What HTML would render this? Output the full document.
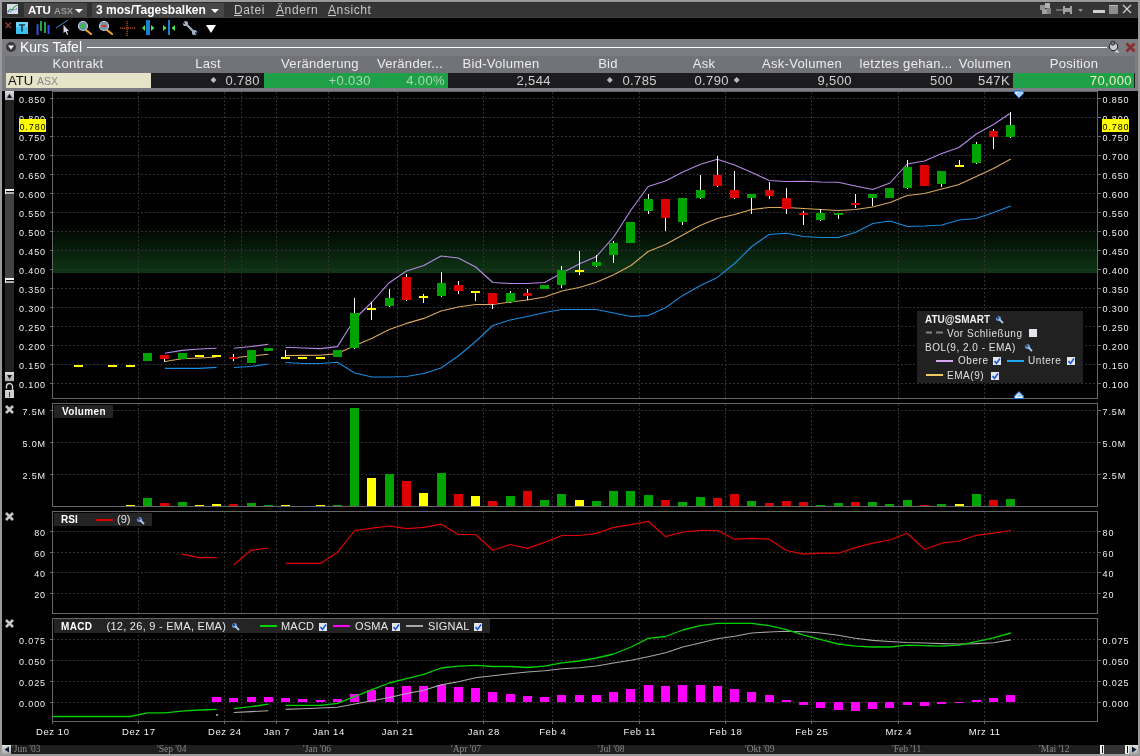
<!DOCTYPE html>
<html><head><meta charset="utf-8"><style>
html,body{margin:0;padding:0;background:#000;width:1140px;height:756px;overflow:hidden}
svg{display:block;will-change:transform} text{-webkit-font-smoothing:antialiased}
</style></head><body>
<svg width="1140" height="756" viewBox="0 0 1140 756">
<rect x="0" y="0" width="1140" height="756" fill="#9a9a9a" />
<rect x="2" y="2" width="1136" height="16" fill="#353535" />
<rect x="2" y="2" width="1136" height="1" fill="#2c2c2c" />
<rect x="2" y="17" width="1136" height="1" fill="#404040" />
<rect x="2" y="3" width="22" height="14" fill="#303030" />
<rect x="24" y="3" width="63" height="14" fill="#474747" />
<rect x="92" y="3" width="132" height="14" fill="#474747" />
<rect x="87" y="3" width="5" height="14" fill="#303030" />
<rect x="2" y="18" width="1136" height="21" fill="#000" />
<rect x="2" y="39" width="1136" height="52" fill="#7c7d82" />
<rect x="5" y="56" width="1130" height="17" fill="#727378" />
<rect x="151" y="73" width="984" height="15" fill="#1c1c1e" />
<rect x="6" y="73" width="145" height="15" fill="#e6e4c8" />
<rect x="264" y="73" width="184" height="15" fill="#1e9f48" />
<rect x="1013" y="73" width="121" height="15" fill="#1e9f48" />
<rect x="2" y="91" width="1136" height="654" fill="#000" />
<rect x="2" y="745" width="1136" height="9" fill="#1e1e1e" />
<defs><linearGradient id="gb" x1="0" y1="0" x2="0" y2="1"><stop offset="0" stop-color="#000"/><stop offset="1" stop-color="#0e3614"/></linearGradient></defs>
<rect x="53" y="222" width="1045" height="51" fill="url(#gb)" />
<line x1="53" y1="98.5" x2="1098" y2="98.5" stroke="#313131" stroke-width="1" stroke-dasharray="2 2"/>
<rect x="50" y="98" width="2" height="1" fill="#6a6a6a" />
<rect x="1098" y="98" width="3" height="1" fill="#6a6a6a" />
<text x="46" y="103" font-size="9" fill="#f0f0f0" text-anchor="end" font-weight="normal" font-family='"Liberation Sans", sans-serif' letter-spacing="0.9">0.850</text>
<text x="1102.5" y="103" font-size="9" fill="#f0f0f0" text-anchor="start" font-weight="normal" font-family='"Liberation Sans", sans-serif' letter-spacing="0.9">0.850</text>
<line x1="53" y1="117.5" x2="1098" y2="117.5" stroke="#313131" stroke-width="1" stroke-dasharray="2 2"/>
<rect x="50" y="117" width="2" height="1" fill="#6a6a6a" />
<rect x="1098" y="117" width="3" height="1" fill="#6a6a6a" />
<text x="46" y="122" font-size="9" fill="#f0f0f0" text-anchor="end" font-weight="normal" font-family='"Liberation Sans", sans-serif' letter-spacing="0.9">0.800</text>
<text x="1102.5" y="122" font-size="9" fill="#f0f0f0" text-anchor="start" font-weight="normal" font-family='"Liberation Sans", sans-serif' letter-spacing="0.9">0.800</text>
<line x1="53" y1="136.5" x2="1098" y2="136.5" stroke="#313131" stroke-width="1" stroke-dasharray="2 2"/>
<rect x="50" y="136" width="2" height="1" fill="#6a6a6a" />
<rect x="1098" y="136" width="3" height="1" fill="#6a6a6a" />
<text x="46" y="141" font-size="9" fill="#f0f0f0" text-anchor="end" font-weight="normal" font-family='"Liberation Sans", sans-serif' letter-spacing="0.9">0.750</text>
<text x="1102.5" y="141" font-size="9" fill="#f0f0f0" text-anchor="start" font-weight="normal" font-family='"Liberation Sans", sans-serif' letter-spacing="0.9">0.750</text>
<line x1="53" y1="155.5" x2="1098" y2="155.5" stroke="#313131" stroke-width="1" stroke-dasharray="2 2"/>
<rect x="50" y="155" width="2" height="1" fill="#6a6a6a" />
<rect x="1098" y="155" width="3" height="1" fill="#6a6a6a" />
<text x="46" y="160" font-size="9" fill="#f0f0f0" text-anchor="end" font-weight="normal" font-family='"Liberation Sans", sans-serif' letter-spacing="0.9">0.700</text>
<text x="1102.5" y="160" font-size="9" fill="#f0f0f0" text-anchor="start" font-weight="normal" font-family='"Liberation Sans", sans-serif' letter-spacing="0.9">0.700</text>
<line x1="53" y1="174.5" x2="1098" y2="174.5" stroke="#313131" stroke-width="1" stroke-dasharray="2 2"/>
<rect x="50" y="174" width="2" height="1" fill="#6a6a6a" />
<rect x="1098" y="174" width="3" height="1" fill="#6a6a6a" />
<text x="46" y="179" font-size="9" fill="#f0f0f0" text-anchor="end" font-weight="normal" font-family='"Liberation Sans", sans-serif' letter-spacing="0.9">0.650</text>
<text x="1102.5" y="179" font-size="9" fill="#f0f0f0" text-anchor="start" font-weight="normal" font-family='"Liberation Sans", sans-serif' letter-spacing="0.9">0.650</text>
<line x1="53" y1="193.5" x2="1098" y2="193.5" stroke="#313131" stroke-width="1" stroke-dasharray="2 2"/>
<rect x="50" y="193" width="2" height="1" fill="#6a6a6a" />
<rect x="1098" y="193" width="3" height="1" fill="#6a6a6a" />
<text x="46" y="198" font-size="9" fill="#f0f0f0" text-anchor="end" font-weight="normal" font-family='"Liberation Sans", sans-serif' letter-spacing="0.9">0.600</text>
<text x="1102.5" y="198" font-size="9" fill="#f0f0f0" text-anchor="start" font-weight="normal" font-family='"Liberation Sans", sans-serif' letter-spacing="0.9">0.600</text>
<line x1="53" y1="212.5" x2="1098" y2="212.5" stroke="#313131" stroke-width="1" stroke-dasharray="2 2"/>
<rect x="50" y="212" width="2" height="1" fill="#6a6a6a" />
<rect x="1098" y="212" width="3" height="1" fill="#6a6a6a" />
<text x="46" y="217" font-size="9" fill="#f0f0f0" text-anchor="end" font-weight="normal" font-family='"Liberation Sans", sans-serif' letter-spacing="0.9">0.550</text>
<text x="1102.5" y="217" font-size="9" fill="#f0f0f0" text-anchor="start" font-weight="normal" font-family='"Liberation Sans", sans-serif' letter-spacing="0.9">0.550</text>
<line x1="53" y1="231.5" x2="1098" y2="231.5" stroke="#313131" stroke-width="1" stroke-dasharray="2 2"/>
<rect x="50" y="231" width="2" height="1" fill="#6a6a6a" />
<rect x="1098" y="231" width="3" height="1" fill="#6a6a6a" />
<text x="46" y="236" font-size="9" fill="#f0f0f0" text-anchor="end" font-weight="normal" font-family='"Liberation Sans", sans-serif' letter-spacing="0.9">0.500</text>
<text x="1102.5" y="236" font-size="9" fill="#f0f0f0" text-anchor="start" font-weight="normal" font-family='"Liberation Sans", sans-serif' letter-spacing="0.9">0.500</text>
<line x1="53" y1="250.5" x2="1098" y2="250.5" stroke="#313131" stroke-width="1" stroke-dasharray="2 2"/>
<rect x="50" y="250" width="2" height="1" fill="#6a6a6a" />
<rect x="1098" y="250" width="3" height="1" fill="#6a6a6a" />
<text x="46" y="255" font-size="9" fill="#f0f0f0" text-anchor="end" font-weight="normal" font-family='"Liberation Sans", sans-serif' letter-spacing="0.9">0.450</text>
<text x="1102.5" y="255" font-size="9" fill="#f0f0f0" text-anchor="start" font-weight="normal" font-family='"Liberation Sans", sans-serif' letter-spacing="0.9">0.450</text>
<line x1="53" y1="269.5" x2="1098" y2="269.5" stroke="#313131" stroke-width="1" stroke-dasharray="2 2"/>
<rect x="50" y="269" width="2" height="1" fill="#6a6a6a" />
<rect x="1098" y="269" width="3" height="1" fill="#6a6a6a" />
<text x="46" y="274" font-size="9" fill="#f0f0f0" text-anchor="end" font-weight="normal" font-family='"Liberation Sans", sans-serif' letter-spacing="0.9">0.400</text>
<text x="1102.5" y="274" font-size="9" fill="#f0f0f0" text-anchor="start" font-weight="normal" font-family='"Liberation Sans", sans-serif' letter-spacing="0.9">0.400</text>
<line x1="53" y1="288.5" x2="1098" y2="288.5" stroke="#313131" stroke-width="1" stroke-dasharray="2 2"/>
<rect x="50" y="288" width="2" height="1" fill="#6a6a6a" />
<rect x="1098" y="288" width="3" height="1" fill="#6a6a6a" />
<text x="46" y="293" font-size="9" fill="#f0f0f0" text-anchor="end" font-weight="normal" font-family='"Liberation Sans", sans-serif' letter-spacing="0.9">0.350</text>
<text x="1102.5" y="293" font-size="9" fill="#f0f0f0" text-anchor="start" font-weight="normal" font-family='"Liberation Sans", sans-serif' letter-spacing="0.9">0.350</text>
<line x1="53" y1="307.5" x2="1098" y2="307.5" stroke="#313131" stroke-width="1" stroke-dasharray="2 2"/>
<rect x="50" y="307" width="2" height="1" fill="#6a6a6a" />
<rect x="1098" y="307" width="3" height="1" fill="#6a6a6a" />
<text x="46" y="312" font-size="9" fill="#f0f0f0" text-anchor="end" font-weight="normal" font-family='"Liberation Sans", sans-serif' letter-spacing="0.9">0.300</text>
<text x="1102.5" y="312" font-size="9" fill="#f0f0f0" text-anchor="start" font-weight="normal" font-family='"Liberation Sans", sans-serif' letter-spacing="0.9">0.300</text>
<line x1="53" y1="326.5" x2="1098" y2="326.5" stroke="#313131" stroke-width="1" stroke-dasharray="2 2"/>
<rect x="50" y="326" width="2" height="1" fill="#6a6a6a" />
<rect x="1098" y="326" width="3" height="1" fill="#6a6a6a" />
<text x="46" y="331" font-size="9" fill="#f0f0f0" text-anchor="end" font-weight="normal" font-family='"Liberation Sans", sans-serif' letter-spacing="0.9">0.250</text>
<text x="1102.5" y="331" font-size="9" fill="#f0f0f0" text-anchor="start" font-weight="normal" font-family='"Liberation Sans", sans-serif' letter-spacing="0.9">0.250</text>
<line x1="53" y1="345.5" x2="1098" y2="345.5" stroke="#313131" stroke-width="1" stroke-dasharray="2 2"/>
<rect x="50" y="345" width="2" height="1" fill="#6a6a6a" />
<rect x="1098" y="345" width="3" height="1" fill="#6a6a6a" />
<text x="46" y="350" font-size="9" fill="#f0f0f0" text-anchor="end" font-weight="normal" font-family='"Liberation Sans", sans-serif' letter-spacing="0.9">0.200</text>
<text x="1102.5" y="350" font-size="9" fill="#f0f0f0" text-anchor="start" font-weight="normal" font-family='"Liberation Sans", sans-serif' letter-spacing="0.9">0.200</text>
<line x1="53" y1="364.5" x2="1098" y2="364.5" stroke="#313131" stroke-width="1" stroke-dasharray="2 2"/>
<rect x="50" y="364" width="2" height="1" fill="#6a6a6a" />
<rect x="1098" y="364" width="3" height="1" fill="#6a6a6a" />
<text x="46" y="369" font-size="9" fill="#f0f0f0" text-anchor="end" font-weight="normal" font-family='"Liberation Sans", sans-serif' letter-spacing="0.9">0.150</text>
<text x="1102.5" y="369" font-size="9" fill="#f0f0f0" text-anchor="start" font-weight="normal" font-family='"Liberation Sans", sans-serif' letter-spacing="0.9">0.150</text>
<line x1="53" y1="383.5" x2="1098" y2="383.5" stroke="#313131" stroke-width="1" stroke-dasharray="2 2"/>
<rect x="50" y="383" width="2" height="1" fill="#6a6a6a" />
<rect x="1098" y="383" width="3" height="1" fill="#6a6a6a" />
<text x="46" y="388" font-size="9" fill="#f0f0f0" text-anchor="end" font-weight="normal" font-family='"Liberation Sans", sans-serif' letter-spacing="0.9">0.100</text>
<text x="1102.5" y="388" font-size="9" fill="#f0f0f0" text-anchor="start" font-weight="normal" font-family='"Liberation Sans", sans-serif' letter-spacing="0.9">0.100</text>
<line x1="138.5" y1="92" x2="138.5" y2="398" stroke="#313131" stroke-width="1" stroke-dasharray="2 2"/>
<line x1="224.5" y1="92" x2="224.5" y2="398" stroke="#313131" stroke-width="1" stroke-dasharray="2 2"/>
<line x1="241.5" y1="92" x2="241.5" y2="398" stroke="#313131" stroke-width="1" stroke-dasharray="2 2"/>
<line x1="276.5" y1="92" x2="276.5" y2="398" stroke="#313131" stroke-width="1" stroke-dasharray="2 2"/>
<line x1="328.5" y1="92" x2="328.5" y2="398" stroke="#313131" stroke-width="1" stroke-dasharray="2 2"/>
<line x1="397.5" y1="92" x2="397.5" y2="398" stroke="#313131" stroke-width="1" stroke-dasharray="2 2"/>
<line x1="483.5" y1="92" x2="483.5" y2="398" stroke="#313131" stroke-width="1" stroke-dasharray="2 2"/>
<line x1="552.5" y1="92" x2="552.5" y2="398" stroke="#313131" stroke-width="1" stroke-dasharray="2 2"/>
<line x1="639.5" y1="92" x2="639.5" y2="398" stroke="#313131" stroke-width="1" stroke-dasharray="2 2"/>
<line x1="725.5" y1="92" x2="725.5" y2="398" stroke="#313131" stroke-width="1" stroke-dasharray="2 2"/>
<line x1="811.5" y1="92" x2="811.5" y2="398" stroke="#313131" stroke-width="1" stroke-dasharray="2 2"/>
<line x1="898.5" y1="92" x2="898.5" y2="398" stroke="#313131" stroke-width="1" stroke-dasharray="2 2"/>
<line x1="984.5" y1="92" x2="984.5" y2="398" stroke="#313131" stroke-width="1" stroke-dasharray="2 2"/>
<rect x="52" y="91" width="1" height="308" fill="#666666" />
<rect x="1097" y="91" width="1" height="308" fill="#666666" />
<rect x="52" y="398" width="1046" height="1" fill="#666666" />
<rect x="52" y="91" width="1046" height="1" fill="#666666" />
<polyline points="164.8,353.2 182.0,350.4 199.3,349.0 216.6,348.2" fill="none" stroke="#b58ae6" stroke-width="1.1" stroke-linejoin="round"/>
<polyline points="233.8,348.2 251.1,346.5 268.4,344.2" fill="none" stroke="#b58ae6" stroke-width="1.1" stroke-linejoin="round"/>
<polyline points="285.6,347.2 302.9,348.0 320.2,348.6 337.4,346.6 354.7,319.0 372.0,302.0 389.2,282.7 406.5,271.0 423.8,265.5 441.0,256.0 458.3,258.0 475.6,267.0 492.8,282.5 510.1,283.5 527.4,283.5 544.6,282.5 561.9,273.0 579.2,264.0 596.4,256.5 613.7,237.0 631.0,210.0 648.2,186.5 665.5,181.0 682.8,172.0 700.0,164.5 717.3,159.3 734.6,165.0 751.8,172.5 769.1,180.5 786.4,181.5 803.6,181.3 820.9,182.0 838.2,182.2 855.4,186.0 872.7,189.5 890.0,183.0 907.2,164.0 924.5,161.0 941.8,153.5 959.0,147.5 976.3,134.0 993.5,124.5 1010.8,113.0" fill="none" stroke="#b58ae6" stroke-width="1.1" stroke-linejoin="round"/>
<polyline points="164.8,361.5 182.0,358.8 199.3,358.0 216.6,357.0" fill="none" stroke="#d9a85e" stroke-width="1.1" stroke-linejoin="round"/>
<polyline points="233.8,357.8 251.1,356.0 268.4,354.2" fill="none" stroke="#d9a85e" stroke-width="1.1" stroke-linejoin="round"/>
<polyline points="285.6,355.6 302.9,355.4 320.2,355.2 337.4,353.6 354.7,345.8 372.0,338.3 389.2,329.4 406.5,323.4 423.8,318.4 441.0,311.0 458.3,307.0 475.6,304.5 492.8,304.5 510.1,302.0 527.4,300.0 544.6,297.0 561.9,291.0 579.2,287.5 596.4,282.3 613.7,274.7 631.0,265.5 648.2,251.5 665.5,244.5 682.8,235.0 700.0,225.5 717.3,218.5 734.6,214.5 751.8,209.5 769.1,207.5 786.4,207.5 803.6,208.5 820.9,209.5 838.2,210.5 855.4,209.5 872.7,207.0 890.0,202.5 907.2,195.5 924.5,193.5 941.8,189.0 959.0,184.5 976.3,176.5 993.5,168.5 1010.8,159.0" fill="none" stroke="#d9a85e" stroke-width="1.1" stroke-linejoin="round"/>
<polyline points="164.8,368.4 182.0,368.4 199.3,368.4 216.6,367.4" fill="none" stroke="#1a8be0" stroke-width="1.1" stroke-linejoin="round"/>
<polyline points="233.8,367.5 251.1,366.5 268.4,364.0" fill="none" stroke="#1a8be0" stroke-width="1.1" stroke-linejoin="round"/>
<polyline points="285.6,362.5 302.9,363.5 320.2,363.5 337.4,362.3 354.7,373.0 372.0,377.0 389.2,377.0 406.5,376.5 423.8,373.5 441.0,368.0 458.3,356.0 475.6,341.5 492.8,325.5 510.1,320.0 527.4,316.5 544.6,312.5 561.9,309.5 579.2,309.5 596.4,309.5 613.7,313.0 631.0,316.5 648.2,315.6 665.5,307.7 682.8,295.4 700.0,285.8 717.3,277.4 734.6,263.5 751.8,246.5 769.1,234.5 786.4,233.3 803.6,236.5 820.9,237.5 838.2,237.5 855.4,232.5 872.7,223.5 890.0,221.0 907.2,226.5 924.5,226.0 941.8,225.0 959.0,220.0 976.3,218.5 993.5,212.5 1010.8,206.0" fill="none" stroke="#1a8be0" stroke-width="1.1" stroke-linejoin="round"/>
<rect x="74" y="365" width="9" height="2" fill="#ffff00" />
<rect x="108" y="365" width="9" height="2" fill="#ffff00" />
<rect x="126" y="365" width="9" height="2" fill="#ffff00" />
<rect x="143" y="353" width="9" height="8" fill="#00a400" />
<rect x="164" y="355" width="1" height="7" fill="#fff" />
<rect x="160" y="355" width="9" height="4" fill="#dc0000" />
<rect x="178" y="353" width="9" height="6" fill="#00a400" />
<rect x="195" y="355" width="9" height="2" fill="#ffff00" />
<rect x="212" y="355" width="9" height="2" fill="#ffff00" />
<rect x="233" y="354" width="1" height="7" fill="#fff" />
<rect x="229" y="357" width="9" height="2" fill="#dc0000" />
<rect x="247" y="350" width="9" height="13" fill="#00a400" />
<rect x="264" y="348" width="9" height="3" fill="#00a400" />
<rect x="285" y="350" width="1" height="9" fill="#fff" />
<rect x="281" y="357" width="9" height="2" fill="#ffff00" />
<rect x="298" y="357" width="9" height="2" fill="#ffff00" />
<rect x="316" y="357" width="9" height="2" fill="#ffff00" />
<rect x="333" y="350" width="9" height="7" fill="#00a400" />
<rect x="354" y="298" width="1" height="51" fill="#fff" />
<rect x="350" y="313" width="9" height="35" fill="#00a400" />
<rect x="371" y="302" width="1" height="18" fill="#fff" />
<rect x="367" y="308" width="9" height="2" fill="#ffff00" />
<rect x="389" y="289" width="1" height="18" fill="#fff" />
<rect x="385" y="298" width="9" height="8" fill="#00a400" />
<rect x="406" y="274" width="1" height="27" fill="#fff" />
<rect x="402" y="277" width="9" height="23" fill="#dc0000" />
<rect x="423" y="294" width="1" height="9" fill="#fff" />
<rect x="419" y="296" width="9" height="2" fill="#ffff00" />
<rect x="441" y="272" width="1" height="25" fill="#fff" />
<rect x="437" y="283" width="9" height="13" fill="#00a400" />
<rect x="458" y="281" width="1" height="13" fill="#fff" />
<rect x="454" y="285" width="9" height="6" fill="#dc0000" />
<rect x="475" y="291" width="1" height="10" fill="#fff" />
<rect x="471" y="291" width="9" height="2" fill="#ffff00" />
<rect x="492" y="293" width="1" height="16" fill="#fff" />
<rect x="488" y="293" width="9" height="11" fill="#dc0000" />
<rect x="510" y="291" width="1" height="12" fill="#fff" />
<rect x="506" y="293" width="9" height="9" fill="#00a400" />
<rect x="527" y="289" width="1" height="11" fill="#fff" />
<rect x="523" y="293" width="9" height="3" fill="#dc0000" />
<rect x="540" y="285" width="9" height="4" fill="#00a400" />
<rect x="561" y="266" width="1" height="22" fill="#fff" />
<rect x="557" y="270" width="9" height="15" fill="#00a400" />
<rect x="579" y="251" width="1" height="24" fill="#fff" />
<rect x="575" y="270" width="9" height="2" fill="#ffff00" />
<rect x="596" y="255" width="1" height="12" fill="#fff" />
<rect x="592" y="262" width="9" height="4" fill="#00a400" />
<rect x="613" y="241" width="1" height="22" fill="#fff" />
<rect x="609" y="243" width="9" height="12" fill="#00a400" />
<rect x="626" y="222" width="9" height="21" fill="#00a400" />
<rect x="648" y="194" width="1" height="20" fill="#fff" />
<rect x="644" y="199" width="9" height="12" fill="#00a400" />
<rect x="665" y="199" width="1" height="32" fill="#fff" />
<rect x="661" y="199" width="9" height="19" fill="#dc0000" />
<rect x="682" y="198" width="1" height="27" fill="#fff" />
<rect x="678" y="198" width="9" height="24" fill="#00a400" />
<rect x="700" y="175" width="1" height="24" fill="#fff" />
<rect x="696" y="190" width="9" height="8" fill="#00a400" />
<rect x="717" y="156" width="1" height="31" fill="#fff" />
<rect x="713" y="175" width="9" height="11" fill="#dc0000" />
<rect x="734" y="171" width="1" height="28" fill="#fff" />
<rect x="730" y="190" width="9" height="8" fill="#dc0000" />
<rect x="751" y="194" width="1" height="20" fill="#fff" />
<rect x="747" y="194" width="9" height="4" fill="#00a400" />
<rect x="769" y="182" width="1" height="17" fill="#fff" />
<rect x="765" y="190" width="9" height="6" fill="#dc0000" />
<rect x="786" y="188" width="1" height="26" fill="#fff" />
<rect x="782" y="198" width="9" height="11" fill="#dc0000" />
<rect x="803" y="211" width="1" height="14" fill="#fff" />
<rect x="799" y="213" width="9" height="2" fill="#dc0000" />
<rect x="820" y="209" width="1" height="12" fill="#fff" />
<rect x="816" y="213" width="9" height="7" fill="#00a400" />
<rect x="838" y="213" width="1" height="6" fill="#fff" />
<rect x="834" y="213" width="9" height="2" fill="#00a400" />
<rect x="855" y="194" width="1" height="14" fill="#fff" />
<rect x="851" y="203" width="9" height="2" fill="#dc0000" />
<rect x="872" y="194" width="1" height="12" fill="#fff" />
<rect x="868" y="194" width="9" height="4" fill="#00a400" />
<rect x="885" y="188" width="9" height="10" fill="#00a400" />
<rect x="907" y="160" width="1" height="29" fill="#fff" />
<rect x="903" y="167" width="9" height="21" fill="#00a400" />
<rect x="920" y="165" width="9" height="21" fill="#dc0000" />
<rect x="941" y="171" width="1" height="16" fill="#fff" />
<rect x="937" y="171" width="9" height="13" fill="#00a400" />
<rect x="959" y="160" width="1" height="7" fill="#fff" />
<rect x="955" y="165" width="9" height="2" fill="#ffff00" />
<rect x="976" y="142" width="1" height="22" fill="#fff" />
<rect x="972" y="144" width="9" height="19" fill="#00a400" />
<rect x="993" y="129" width="1" height="20" fill="#fff" />
<rect x="989" y="131" width="9" height="6" fill="#dc0000" />
<rect x="1010" y="112" width="1" height="26" fill="#fff" />
<rect x="1006" y="125" width="9" height="12" fill="#00a400" />
<line x1="53" y1="410.5" x2="1098" y2="410.5" stroke="#313131" stroke-width="1" stroke-dasharray="2 2"/>
<rect x="50" y="410" width="2" height="1" fill="#6a6a6a" />
<rect x="1098" y="410" width="3" height="1" fill="#6a6a6a" />
<text x="46" y="415" font-size="9" fill="#f0f0f0" text-anchor="end" font-weight="normal" font-family='"Liberation Sans", sans-serif' letter-spacing="0.9">7.5M</text>
<text x="1102.5" y="415" font-size="9" fill="#f0f0f0" text-anchor="start" font-weight="normal" font-family='"Liberation Sans", sans-serif' letter-spacing="0.9">7.5M</text>
<line x1="53" y1="442.5" x2="1098" y2="442.5" stroke="#313131" stroke-width="1" stroke-dasharray="2 2"/>
<rect x="50" y="442" width="2" height="1" fill="#6a6a6a" />
<rect x="1098" y="442" width="3" height="1" fill="#6a6a6a" />
<text x="46" y="447" font-size="9" fill="#f0f0f0" text-anchor="end" font-weight="normal" font-family='"Liberation Sans", sans-serif' letter-spacing="0.9">5.0M</text>
<text x="1102.5" y="447" font-size="9" fill="#f0f0f0" text-anchor="start" font-weight="normal" font-family='"Liberation Sans", sans-serif' letter-spacing="0.9">5.0M</text>
<line x1="53" y1="474.5" x2="1098" y2="474.5" stroke="#313131" stroke-width="1" stroke-dasharray="2 2"/>
<rect x="50" y="474" width="2" height="1" fill="#6a6a6a" />
<rect x="1098" y="474" width="3" height="1" fill="#6a6a6a" />
<text x="46" y="479" font-size="9" fill="#f0f0f0" text-anchor="end" font-weight="normal" font-family='"Liberation Sans", sans-serif' letter-spacing="0.9">2.5M</text>
<text x="1102.5" y="479" font-size="9" fill="#f0f0f0" text-anchor="start" font-weight="normal" font-family='"Liberation Sans", sans-serif' letter-spacing="0.9">2.5M</text>
<line x1="138.5" y1="404" x2="138.5" y2="506" stroke="#313131" stroke-width="1" stroke-dasharray="2 2"/>
<line x1="224.5" y1="404" x2="224.5" y2="506" stroke="#313131" stroke-width="1" stroke-dasharray="2 2"/>
<line x1="241.5" y1="404" x2="241.5" y2="506" stroke="#313131" stroke-width="1" stroke-dasharray="2 2"/>
<line x1="276.5" y1="404" x2="276.5" y2="506" stroke="#313131" stroke-width="1" stroke-dasharray="2 2"/>
<line x1="328.5" y1="404" x2="328.5" y2="506" stroke="#313131" stroke-width="1" stroke-dasharray="2 2"/>
<line x1="397.5" y1="404" x2="397.5" y2="506" stroke="#313131" stroke-width="1" stroke-dasharray="2 2"/>
<line x1="483.5" y1="404" x2="483.5" y2="506" stroke="#313131" stroke-width="1" stroke-dasharray="2 2"/>
<line x1="552.5" y1="404" x2="552.5" y2="506" stroke="#313131" stroke-width="1" stroke-dasharray="2 2"/>
<line x1="639.5" y1="404" x2="639.5" y2="506" stroke="#313131" stroke-width="1" stroke-dasharray="2 2"/>
<line x1="725.5" y1="404" x2="725.5" y2="506" stroke="#313131" stroke-width="1" stroke-dasharray="2 2"/>
<line x1="811.5" y1="404" x2="811.5" y2="506" stroke="#313131" stroke-width="1" stroke-dasharray="2 2"/>
<line x1="898.5" y1="404" x2="898.5" y2="506" stroke="#313131" stroke-width="1" stroke-dasharray="2 2"/>
<line x1="984.5" y1="404" x2="984.5" y2="506" stroke="#313131" stroke-width="1" stroke-dasharray="2 2"/>
<rect x="52" y="403" width="1046" height="1" fill="#666666" />
<rect x="52" y="403" width="1" height="104" fill="#666666" />
<rect x="1097" y="403" width="1" height="104" fill="#666666" />
<rect x="52" y="506" width="1046" height="1" fill="#666666" />
<rect x="126" y="505" width="9" height="1" fill="#ffff00" />
<rect x="143" y="498" width="9" height="8" fill="#00a400" />
<rect x="160" y="503" width="9" height="3" fill="#dc0000" />
<rect x="178" y="502" width="9" height="4" fill="#00a400" />
<rect x="195" y="505" width="9" height="1" fill="#ffff00" />
<rect x="212" y="504" width="9" height="2" fill="#ffff00" />
<rect x="229" y="504" width="9" height="2" fill="#dc0000" />
<rect x="247" y="503" width="9" height="3" fill="#00a400" />
<rect x="264" y="505" width="9" height="1" fill="#00a400" />
<rect x="281" y="505" width="9" height="1" fill="#ffff00" />
<rect x="316" y="505" width="9" height="1" fill="#ffff00" />
<rect x="333" y="505" width="9" height="1" fill="#00a400" />
<rect x="350" y="408" width="9" height="98" fill="#00a400" />
<rect x="367" y="478" width="9" height="28" fill="#ffff00" />
<rect x="385" y="474" width="9" height="32" fill="#00a400" />
<rect x="402" y="481" width="9" height="25" fill="#dc0000" />
<rect x="419" y="493" width="9" height="13" fill="#ffff00" />
<rect x="437" y="473" width="9" height="33" fill="#00a400" />
<rect x="454" y="494" width="9" height="12" fill="#dc0000" />
<rect x="471" y="496" width="9" height="10" fill="#ffff00" />
<rect x="488" y="501" width="9" height="5" fill="#dc0000" />
<rect x="506" y="496" width="9" height="10" fill="#00a400" />
<rect x="523" y="491" width="9" height="15" fill="#dc0000" />
<rect x="540" y="500" width="9" height="6" fill="#00a400" />
<rect x="557" y="494" width="9" height="12" fill="#00a400" />
<rect x="575" y="500" width="9" height="6" fill="#ffff00" />
<rect x="592" y="501" width="9" height="5" fill="#00a400" />
<rect x="609" y="491" width="9" height="15" fill="#00a400" />
<rect x="626" y="491" width="9" height="15" fill="#00a400" />
<rect x="644" y="495" width="9" height="11" fill="#00a400" />
<rect x="661" y="500" width="9" height="6" fill="#dc0000" />
<rect x="678" y="502" width="9" height="4" fill="#00a400" />
<rect x="696" y="497" width="9" height="9" fill="#00a400" />
<rect x="713" y="498" width="9" height="8" fill="#dc0000" />
<rect x="730" y="494" width="9" height="12" fill="#dc0000" />
<rect x="747" y="501" width="9" height="5" fill="#00a400" />
<rect x="765" y="503" width="9" height="3" fill="#dc0000" />
<rect x="782" y="501" width="9" height="5" fill="#dc0000" />
<rect x="799" y="502" width="9" height="4" fill="#dc0000" />
<rect x="816" y="505" width="9" height="1" fill="#00a400" />
<rect x="834" y="503" width="9" height="3" fill="#00a400" />
<rect x="851" y="502" width="9" height="4" fill="#dc0000" />
<rect x="868" y="502" width="9" height="4" fill="#00a400" />
<rect x="885" y="504" width="9" height="2" fill="#00a400" />
<rect x="903" y="500" width="9" height="6" fill="#00a400" />
<rect x="920" y="505" width="9" height="1" fill="#dc0000" />
<rect x="937" y="504" width="9" height="2" fill="#00a400" />
<rect x="955" y="504" width="9" height="2" fill="#ffff00" />
<rect x="972" y="494" width="9" height="12" fill="#00a400" />
<rect x="989" y="500" width="9" height="6" fill="#dc0000" />
<rect x="1006" y="499" width="9" height="7" fill="#00a400" />
<rect x="54" y="405" width="59" height="13" fill="#2a2a2a" fill-opacity="0.85"/>
<text x="62" y="415" font-size="10" fill="#fff" text-anchor="start" font-weight="bold" font-family='"Liberation Sans", sans-serif' letter-spacing="0.35">Volumen</text>
<line x1="53" y1="531.5" x2="1098" y2="531.5" stroke="#313131" stroke-width="1" stroke-dasharray="2 2"/>
<rect x="50" y="531" width="2" height="1" fill="#6a6a6a" />
<rect x="1098" y="531" width="3" height="1" fill="#6a6a6a" />
<text x="46" y="536" font-size="9" fill="#f0f0f0" text-anchor="end" font-weight="normal" font-family='"Liberation Sans", sans-serif' letter-spacing="0.9">80</text>
<text x="1102.5" y="536" font-size="9" fill="#f0f0f0" text-anchor="start" font-weight="normal" font-family='"Liberation Sans", sans-serif' letter-spacing="0.9">80</text>
<line x1="53" y1="552.5" x2="1098" y2="552.5" stroke="#313131" stroke-width="1" stroke-dasharray="2 2"/>
<rect x="50" y="552" width="2" height="1" fill="#6a6a6a" />
<rect x="1098" y="552" width="3" height="1" fill="#6a6a6a" />
<text x="46" y="557" font-size="9" fill="#f0f0f0" text-anchor="end" font-weight="normal" font-family='"Liberation Sans", sans-serif' letter-spacing="0.9">60</text>
<text x="1102.5" y="557" font-size="9" fill="#f0f0f0" text-anchor="start" font-weight="normal" font-family='"Liberation Sans", sans-serif' letter-spacing="0.9">60</text>
<line x1="53" y1="572.5" x2="1098" y2="572.5" stroke="#313131" stroke-width="1" stroke-dasharray="2 2"/>
<rect x="50" y="572" width="2" height="1" fill="#6a6a6a" />
<rect x="1098" y="572" width="3" height="1" fill="#6a6a6a" />
<text x="46" y="577" font-size="9" fill="#f0f0f0" text-anchor="end" font-weight="normal" font-family='"Liberation Sans", sans-serif' letter-spacing="0.9">40</text>
<text x="1102.5" y="577" font-size="9" fill="#f0f0f0" text-anchor="start" font-weight="normal" font-family='"Liberation Sans", sans-serif' letter-spacing="0.9">40</text>
<line x1="53" y1="593.5" x2="1098" y2="593.5" stroke="#313131" stroke-width="1" stroke-dasharray="2 2"/>
<rect x="50" y="593" width="2" height="1" fill="#6a6a6a" />
<rect x="1098" y="593" width="3" height="1" fill="#6a6a6a" />
<text x="46" y="598" font-size="9" fill="#f0f0f0" text-anchor="end" font-weight="normal" font-family='"Liberation Sans", sans-serif' letter-spacing="0.9">20</text>
<text x="1102.5" y="598" font-size="9" fill="#f0f0f0" text-anchor="start" font-weight="normal" font-family='"Liberation Sans", sans-serif' letter-spacing="0.9">20</text>
<line x1="138.5" y1="512" x2="138.5" y2="613" stroke="#313131" stroke-width="1" stroke-dasharray="2 2"/>
<line x1="224.5" y1="512" x2="224.5" y2="613" stroke="#313131" stroke-width="1" stroke-dasharray="2 2"/>
<line x1="241.5" y1="512" x2="241.5" y2="613" stroke="#313131" stroke-width="1" stroke-dasharray="2 2"/>
<line x1="276.5" y1="512" x2="276.5" y2="613" stroke="#313131" stroke-width="1" stroke-dasharray="2 2"/>
<line x1="328.5" y1="512" x2="328.5" y2="613" stroke="#313131" stroke-width="1" stroke-dasharray="2 2"/>
<line x1="397.5" y1="512" x2="397.5" y2="613" stroke="#313131" stroke-width="1" stroke-dasharray="2 2"/>
<line x1="483.5" y1="512" x2="483.5" y2="613" stroke="#313131" stroke-width="1" stroke-dasharray="2 2"/>
<line x1="552.5" y1="512" x2="552.5" y2="613" stroke="#313131" stroke-width="1" stroke-dasharray="2 2"/>
<line x1="639.5" y1="512" x2="639.5" y2="613" stroke="#313131" stroke-width="1" stroke-dasharray="2 2"/>
<line x1="725.5" y1="512" x2="725.5" y2="613" stroke="#313131" stroke-width="1" stroke-dasharray="2 2"/>
<line x1="811.5" y1="512" x2="811.5" y2="613" stroke="#313131" stroke-width="1" stroke-dasharray="2 2"/>
<line x1="898.5" y1="512" x2="898.5" y2="613" stroke="#313131" stroke-width="1" stroke-dasharray="2 2"/>
<line x1="984.5" y1="512" x2="984.5" y2="613" stroke="#313131" stroke-width="1" stroke-dasharray="2 2"/>
<rect x="52" y="511" width="1046" height="1" fill="#666666" />
<rect x="52" y="511" width="1" height="103" fill="#666666" />
<rect x="1097" y="511" width="1" height="103" fill="#666666" />
<rect x="52" y="613" width="1046" height="1" fill="#666666" />
<polyline points="182.0,554.2 199.3,557.6 216.6,557.6" fill="none" stroke="#e00000" stroke-width="1.2" stroke-linejoin="round"/>
<polyline points="233.8,564.7 251.1,550.3 268.4,548.0" fill="none" stroke="#e00000" stroke-width="1.2" stroke-linejoin="round"/>
<polyline points="285.6,563.4 302.9,563.4 320.2,563.4 337.4,552.4 354.7,530.5 372.0,528.2 389.2,526.0 406.5,528.7 423.8,527.4 441.0,524.2 458.3,534.5 475.6,534.5 492.8,550.3 510.1,544.5 527.4,548.4 544.6,542.4 561.9,535.5 579.2,535.5 596.4,533.4 613.7,527.4 631.0,524.7 648.2,521.3 665.5,536.6 682.8,532.0 700.0,530.3 717.3,530.5 734.6,539.2 751.8,538.4 769.1,539.2 786.4,550.5 803.6,554.2 820.9,553.2 838.2,553.2 855.4,547.6 872.7,543.2 890.0,540.0 907.2,533.2 924.5,549.2 941.8,543.2 959.0,541.0 976.3,535.3 993.5,533.2 1010.8,530.5" fill="none" stroke="#e00000" stroke-width="1.2" stroke-linejoin="round"/>
<rect x="54" y="513" width="98" height="13" fill="#2a2a2a" fill-opacity="0.85"/>
<text x="61" y="523" font-size="10" fill="#fff" text-anchor="start" font-weight="bold" font-family='"Liberation Sans", sans-serif' >RSI</text>
<rect x="96" y="519" width="17" height="2" fill="#e00000" />
<text x="117" y="523" font-size="11" fill="#e8e8e8" text-anchor="start" font-weight="normal" font-family='"Liberation Sans", sans-serif' >(9)</text>
<line x1="53" y1="639.5" x2="1098" y2="639.5" stroke="#313131" stroke-width="1" stroke-dasharray="2 2"/>
<rect x="50" y="639" width="2" height="1" fill="#6a6a6a" />
<rect x="1098" y="639" width="3" height="1" fill="#6a6a6a" />
<text x="46" y="644" font-size="9" fill="#f0f0f0" text-anchor="end" font-weight="normal" font-family='"Liberation Sans", sans-serif' letter-spacing="0.9">0.075</text>
<text x="1102.5" y="644" font-size="9" fill="#f0f0f0" text-anchor="start" font-weight="normal" font-family='"Liberation Sans", sans-serif' letter-spacing="0.9">0.075</text>
<line x1="53" y1="660.5" x2="1098" y2="660.5" stroke="#313131" stroke-width="1" stroke-dasharray="2 2"/>
<rect x="50" y="660" width="2" height="1" fill="#6a6a6a" />
<rect x="1098" y="660" width="3" height="1" fill="#6a6a6a" />
<text x="46" y="665" font-size="9" fill="#f0f0f0" text-anchor="end" font-weight="normal" font-family='"Liberation Sans", sans-serif' letter-spacing="0.9">0.050</text>
<text x="1102.5" y="665" font-size="9" fill="#f0f0f0" text-anchor="start" font-weight="normal" font-family='"Liberation Sans", sans-serif' letter-spacing="0.9">0.050</text>
<line x1="53" y1="681.5" x2="1098" y2="681.5" stroke="#313131" stroke-width="1" stroke-dasharray="2 2"/>
<rect x="50" y="681" width="2" height="1" fill="#6a6a6a" />
<rect x="1098" y="681" width="3" height="1" fill="#6a6a6a" />
<text x="46" y="686" font-size="9" fill="#f0f0f0" text-anchor="end" font-weight="normal" font-family='"Liberation Sans", sans-serif' letter-spacing="0.9">0.025</text>
<text x="1102.5" y="686" font-size="9" fill="#f0f0f0" text-anchor="start" font-weight="normal" font-family='"Liberation Sans", sans-serif' letter-spacing="0.9">0.025</text>
<line x1="53" y1="702.5" x2="1098" y2="702.5" stroke="#313131" stroke-width="1" stroke-dasharray="2 2"/>
<rect x="50" y="702" width="2" height="1" fill="#6a6a6a" />
<rect x="1098" y="702" width="3" height="1" fill="#6a6a6a" />
<text x="46" y="707" font-size="9" fill="#f0f0f0" text-anchor="end" font-weight="normal" font-family='"Liberation Sans", sans-serif' letter-spacing="0.9">0.000</text>
<text x="1102.5" y="707" font-size="9" fill="#f0f0f0" text-anchor="start" font-weight="normal" font-family='"Liberation Sans", sans-serif' letter-spacing="0.9">0.000</text>
<line x1="138.5" y1="619" x2="138.5" y2="721" stroke="#313131" stroke-width="1" stroke-dasharray="2 2"/>
<line x1="224.5" y1="619" x2="224.5" y2="721" stroke="#313131" stroke-width="1" stroke-dasharray="2 2"/>
<line x1="241.5" y1="619" x2="241.5" y2="721" stroke="#313131" stroke-width="1" stroke-dasharray="2 2"/>
<line x1="276.5" y1="619" x2="276.5" y2="721" stroke="#313131" stroke-width="1" stroke-dasharray="2 2"/>
<line x1="328.5" y1="619" x2="328.5" y2="721" stroke="#313131" stroke-width="1" stroke-dasharray="2 2"/>
<line x1="397.5" y1="619" x2="397.5" y2="721" stroke="#313131" stroke-width="1" stroke-dasharray="2 2"/>
<line x1="483.5" y1="619" x2="483.5" y2="721" stroke="#313131" stroke-width="1" stroke-dasharray="2 2"/>
<line x1="552.5" y1="619" x2="552.5" y2="721" stroke="#313131" stroke-width="1" stroke-dasharray="2 2"/>
<line x1="639.5" y1="619" x2="639.5" y2="721" stroke="#313131" stroke-width="1" stroke-dasharray="2 2"/>
<line x1="725.5" y1="619" x2="725.5" y2="721" stroke="#313131" stroke-width="1" stroke-dasharray="2 2"/>
<line x1="811.5" y1="619" x2="811.5" y2="721" stroke="#313131" stroke-width="1" stroke-dasharray="2 2"/>
<line x1="898.5" y1="619" x2="898.5" y2="721" stroke="#313131" stroke-width="1" stroke-dasharray="2 2"/>
<line x1="984.5" y1="619" x2="984.5" y2="721" stroke="#313131" stroke-width="1" stroke-dasharray="2 2"/>
<rect x="52" y="618" width="1046" height="1" fill="#666666" />
<rect x="52" y="618" width="1" height="104" fill="#666666" />
<rect x="1097" y="618" width="1" height="104" fill="#666666" />
<rect x="52" y="721" width="1046" height="1" fill="#666666" />
<rect x="212" y="697" width="9" height="5" fill="#ff00ff" />
<rect x="229" y="698" width="9" height="4" fill="#ff00ff" />
<rect x="247" y="697" width="9" height="5" fill="#ff00ff" />
<rect x="264" y="697" width="9" height="5" fill="#ff00ff" />
<rect x="281" y="698" width="9" height="4" fill="#ff00ff" />
<rect x="298" y="699" width="9" height="3" fill="#ff00ff" />
<rect x="316" y="700" width="9" height="2" fill="#ff00ff" />
<rect x="333" y="699" width="9" height="3" fill="#ff00ff" />
<rect x="350" y="694" width="9" height="8" fill="#ff00ff" />
<rect x="367" y="690" width="9" height="12" fill="#ff00ff" />
<rect x="385" y="687" width="9" height="15" fill="#ff00ff" />
<rect x="402" y="686" width="9" height="16" fill="#ff00ff" />
<rect x="419" y="686" width="9" height="16" fill="#ff00ff" />
<rect x="437" y="685" width="9" height="17" fill="#ff00ff" />
<rect x="454" y="687" width="9" height="15" fill="#ff00ff" />
<rect x="471" y="688" width="9" height="14" fill="#ff00ff" />
<rect x="488" y="692" width="9" height="10" fill="#ff00ff" />
<rect x="506" y="694" width="9" height="8" fill="#ff00ff" />
<rect x="523" y="696" width="9" height="6" fill="#ff00ff" />
<rect x="540" y="697" width="9" height="5" fill="#ff00ff" />
<rect x="557" y="695" width="9" height="7" fill="#ff00ff" />
<rect x="575" y="695" width="9" height="7" fill="#ff00ff" />
<rect x="592" y="695" width="9" height="7" fill="#ff00ff" />
<rect x="609" y="692" width="9" height="10" fill="#ff00ff" />
<rect x="626" y="689" width="9" height="13" fill="#ff00ff" />
<rect x="644" y="685" width="9" height="17" fill="#ff00ff" />
<rect x="661" y="686" width="9" height="16" fill="#ff00ff" />
<rect x="678" y="685" width="9" height="17" fill="#ff00ff" />
<rect x="696" y="685" width="9" height="17" fill="#ff00ff" />
<rect x="713" y="686" width="9" height="16" fill="#ff00ff" />
<rect x="730" y="689" width="9" height="13" fill="#ff00ff" />
<rect x="747" y="692" width="9" height="10" fill="#ff00ff" />
<rect x="765" y="695" width="9" height="7" fill="#ff00ff" />
<rect x="782" y="700" width="9" height="2" fill="#ff00ff" />
<rect x="799" y="702" width="9" height="3" fill="#ff00ff" />
<rect x="816" y="702" width="9" height="6" fill="#ff00ff" />
<rect x="834" y="702" width="9" height="8" fill="#ff00ff" />
<rect x="851" y="702" width="9" height="9" fill="#ff00ff" />
<rect x="868" y="702" width="9" height="7" fill="#ff00ff" />
<rect x="885" y="702" width="9" height="6" fill="#ff00ff" />
<rect x="903" y="702" width="9" height="3" fill="#ff00ff" />
<rect x="920" y="702" width="9" height="4" fill="#ff00ff" />
<rect x="937" y="702" width="9" height="2" fill="#ff00ff" />
<rect x="955" y="702" width="9" height="1" fill="#ff00ff" />
<rect x="972" y="700" width="9" height="2" fill="#ff00ff" />
<rect x="989" y="698" width="9" height="4" fill="#ff00ff" />
<rect x="1006" y="695" width="9" height="7" fill="#ff00ff" />
<polyline points="233.8,712.5 251.1,711.6 268.4,710.7" fill="none" stroke="#a8a8a8" stroke-width="1.1" stroke-linejoin="round"/>
<polyline points="285.6,709.4 302.9,708.7 320.2,708.0 337.4,707.3 354.7,704.0 372.0,700.7 389.2,697.5 406.5,693.6 423.8,690.2 441.0,684.9 458.3,681.7 475.6,677.8 492.8,675.7 510.1,673.8 527.4,672.0 544.6,670.7 561.9,668.8 579.2,667.8 596.4,666.0 613.7,663.0 631.0,660.2 648.2,656.7 665.5,652.8 682.8,647.0 700.0,643.0 717.3,638.8 734.6,636.2 751.8,633.0 769.1,632.0 786.4,631.2 803.6,631.7 820.9,633.0 838.2,635.2 855.4,638.3 872.7,640.4 890.0,641.5 907.2,642.5 924.5,643.0 941.8,643.6 959.0,644.0 976.3,643.6 993.5,642.8 1010.8,639.9" fill="none" stroke="#a8a8a8" stroke-width="1.1" stroke-linejoin="round"/>
<polyline points="53.0,716.5 130.2,716.5 147.5,712.8 164.8,712.8 182.0,711.2 199.3,710.0 216.6,709.4" fill="none" stroke="#00d200" stroke-width="1.3" stroke-linejoin="round"/>
<polyline points="233.8,708.6 251.1,706.7 268.4,704.1" fill="none" stroke="#00d200" stroke-width="1.3" stroke-linejoin="round"/>
<polyline points="285.6,705.4 302.9,705.4 320.2,705.4 337.4,703.3 354.7,696.7 372.0,689.6 389.2,683.0 406.5,678.6 423.8,674.4 441.0,668.0 458.3,666.2 475.6,665.4 492.8,666.5 510.1,666.5 527.4,667.5 544.6,666.2 561.9,662.8 579.2,661.0 596.4,658.0 613.7,654.0 631.0,647.0 648.2,638.3 665.5,636.5 682.8,630.0 700.0,625.7 717.3,623.3 734.6,623.3 751.8,623.3 769.1,625.7 786.4,629.6 803.6,635.2 820.9,639.6 838.2,644.0 855.4,646.2 872.7,647.0 890.0,647.0 907.2,645.2 924.5,645.7 941.8,646.2 959.0,645.2 976.3,641.7 993.5,637.8 1010.8,633.0" fill="none" stroke="#00d200" stroke-width="1.3" stroke-linejoin="round"/>
<rect x="216" y="714" width="2" height="2" fill="#888888" />
<rect x="54" y="619" width="436" height="14" fill="#2a2a2a" fill-opacity="0.85"/>
<text x="61" y="630" font-size="10" fill="#fff" text-anchor="start" font-weight="bold" font-family='"Liberation Sans", sans-serif' letter-spacing="0.3">MACD</text>
<text x="106.5" y="630" font-size="11" fill="#e8e8e8" text-anchor="start" font-weight="normal" font-family='"Liberation Sans", sans-serif' letter-spacing="0.27">(12, 26, 9 - EMA, EMA)</text>
<rect x="260" y="625" width="17" height="2" fill="#00d200" />
<text x="281" y="630" font-size="11" fill="#e8e8e8" text-anchor="start" font-weight="normal" font-family='"Liberation Sans", sans-serif' letter-spacing="0.2">MACD</text>
<rect x="333" y="625" width="17" height="2" fill="#ff00ff" />
<text x="355" y="630" font-size="11" fill="#e8e8e8" text-anchor="start" font-weight="normal" font-family='"Liberation Sans", sans-serif' letter-spacing="0.2">OSMA</text>
<rect x="406" y="625" width="17" height="2" fill="#a8a8a8" />
<text x="428" y="630" font-size="11" fill="#e8e8e8" text-anchor="start" font-weight="normal" font-family='"Liberation Sans", sans-serif' letter-spacing="0.2">SIGNAL</text>
<rect x="52" y="721" width="1" height="3" fill="#666666" />
<text x="52.8" y="735" font-size="9.5" fill="#f0f0f0" text-anchor="middle" font-weight="normal" font-family='"Liberation Sans", sans-serif' letter-spacing="0.6">Dez 10</text>
<rect x="138" y="721" width="1" height="3" fill="#666666" />
<text x="138.8" y="735" font-size="9.5" fill="#f0f0f0" text-anchor="middle" font-weight="normal" font-family='"Liberation Sans", sans-serif' letter-spacing="0.6">Dez 17</text>
<rect x="224" y="721" width="1" height="3" fill="#666666" />
<text x="224.8" y="735" font-size="9.5" fill="#f0f0f0" text-anchor="middle" font-weight="normal" font-family='"Liberation Sans", sans-serif' letter-spacing="0.6">Dez 24</text>
<rect x="276" y="721" width="1" height="3" fill="#666666" />
<text x="276.8" y="735" font-size="9.5" fill="#f0f0f0" text-anchor="middle" font-weight="normal" font-family='"Liberation Sans", sans-serif' letter-spacing="0.6">Jan 7</text>
<rect x="328" y="721" width="1" height="3" fill="#666666" />
<text x="328.8" y="735" font-size="9.5" fill="#f0f0f0" text-anchor="middle" font-weight="normal" font-family='"Liberation Sans", sans-serif' letter-spacing="0.6">Jan 14</text>
<rect x="397" y="721" width="1" height="3" fill="#666666" />
<text x="397.8" y="735" font-size="9.5" fill="#f0f0f0" text-anchor="middle" font-weight="normal" font-family='"Liberation Sans", sans-serif' letter-spacing="0.6">Jan 21</text>
<rect x="483" y="721" width="1" height="3" fill="#666666" />
<text x="483.8" y="735" font-size="9.5" fill="#f0f0f0" text-anchor="middle" font-weight="normal" font-family='"Liberation Sans", sans-serif' letter-spacing="0.6">Jan 28</text>
<rect x="552" y="721" width="1" height="3" fill="#666666" />
<text x="552.8" y="735" font-size="9.5" fill="#f0f0f0" text-anchor="middle" font-weight="normal" font-family='"Liberation Sans", sans-serif' letter-spacing="0.6">Feb 4</text>
<rect x="639" y="721" width="1" height="3" fill="#666666" />
<text x="639.8" y="735" font-size="9.5" fill="#f0f0f0" text-anchor="middle" font-weight="normal" font-family='"Liberation Sans", sans-serif' letter-spacing="0.6">Feb 11</text>
<rect x="725" y="721" width="1" height="3" fill="#666666" />
<text x="725.8" y="735" font-size="9.5" fill="#f0f0f0" text-anchor="middle" font-weight="normal" font-family='"Liberation Sans", sans-serif' letter-spacing="0.6">Feb 18</text>
<rect x="811" y="721" width="1" height="3" fill="#666666" />
<text x="811.8" y="735" font-size="9.5" fill="#f0f0f0" text-anchor="middle" font-weight="normal" font-family='"Liberation Sans", sans-serif' letter-spacing="0.6">Feb 25</text>
<rect x="898" y="721" width="1" height="3" fill="#666666" />
<text x="898.8" y="735" font-size="9.5" fill="#f0f0f0" text-anchor="middle" font-weight="normal" font-family='"Liberation Sans", sans-serif' letter-spacing="0.6">Mrz 4</text>
<rect x="984" y="721" width="1" height="3" fill="#666666" />
<text x="984.8" y="735" font-size="9.5" fill="#f0f0f0" text-anchor="middle" font-weight="normal" font-family='"Liberation Sans", sans-serif' letter-spacing="0.6">Mrz 11</text>
<text x="12" y="752" font-size="9.5" fill="#8a8a8a" text-anchor="start" font-weight="normal" font-family='"Liberation Serif", serif' >'Jun '03</text>
<text x="157" y="752" font-size="9.5" fill="#8a8a8a" text-anchor="start" font-weight="normal" font-family='"Liberation Serif", serif' >'Sep '04</text>
<text x="303" y="752" font-size="9.5" fill="#8a8a8a" text-anchor="start" font-weight="normal" font-family='"Liberation Serif", serif' >'Jan '06</text>
<text x="451" y="752" font-size="9.5" fill="#8a8a8a" text-anchor="start" font-weight="normal" font-family='"Liberation Serif", serif' >'Apr '07</text>
<text x="598" y="752" font-size="9.5" fill="#8a8a8a" text-anchor="start" font-weight="normal" font-family='"Liberation Serif", serif' >'Jul '08</text>
<text x="745" y="752" font-size="9.5" fill="#8a8a8a" text-anchor="start" font-weight="normal" font-family='"Liberation Serif", serif' >'Okt '09</text>
<text x="892" y="752" font-size="9.5" fill="#8a8a8a" text-anchor="start" font-weight="normal" font-family='"Liberation Serif", serif' >'Feb '11</text>
<text x="1039" y="752" font-size="9.5" fill="#8a8a8a" text-anchor="start" font-weight="normal" font-family='"Liberation Serif", serif' >'Mai '12</text>
<text x="28" y="14" font-size="11.5" fill="#fff" text-anchor="start" font-weight="bold" font-family='"Liberation Sans", sans-serif' >ATU</text>
<text x="54" y="14" font-size="9.5" fill="#9a9a9a" text-anchor="start" font-weight="bold" font-family='"Liberation Sans", sans-serif' letter-spacing="-0.2">ASX</text>
<path d="M75 9 L83 9 L79 13 Z" fill="#fff"/>
<text x="96" y="14" font-size="12" fill="#fff" text-anchor="start" font-weight="bold" font-family='"Liberation Sans", sans-serif' >3 mos/Tagesbalken</text>
<path d="M211 9 L219 9 L215 13 Z" fill="#fff"/>
<text x="234" y="14" font-size="12" fill="#c8c8c8" text-anchor="start" font-weight="normal" font-family='"Liberation Sans", sans-serif' letter-spacing="0.6">Datei</text>
<text x="276" y="14" font-size="12" fill="#c8c8c8" text-anchor="start" font-weight="normal" font-family='"Liberation Sans", sans-serif' letter-spacing="0.6">Ändern</text>
<text x="328" y="14" font-size="12" fill="#c8c8c8" text-anchor="start" font-weight="normal" font-family='"Liberation Sans", sans-serif' letter-spacing="0.6">Ansicht</text>
<rect x="234" y="15" width="8" height="1" fill="#c8c8c8" />
<rect x="276" y="15" width="8" height="1" fill="#c8c8c8" />
<rect x="328" y="15" width="8" height="1" fill="#c8c8c8" />
<circle cx="11" cy="47" r="5" fill="#3a3a3a"/><path d="M8 45.5 L14 45.5 L11 49.5 Z" fill="#fff"/>
<text x="20" y="52" font-size="14" fill="#fff" text-anchor="start" font-weight="normal" font-family='"Liberation Sans", sans-serif' >Kurs Tafel</text>
<rect x="87" y="47" width="1020" height="1" fill="#fff" />
<text x="78" y="68" font-size="13" fill="#ececec" text-anchor="middle" font-weight="normal" font-family='"Liberation Sans", sans-serif' letter-spacing="0.3">Kontrakt</text>
<text x="221" y="68" font-size="13" fill="#ececec" text-anchor="end" font-weight="normal" font-family='"Liberation Sans", sans-serif' letter-spacing="0.3">Last</text>
<text x="320" y="68" font-size="13" fill="#ececec" text-anchor="middle" font-weight="normal" font-family='"Liberation Sans", sans-serif' letter-spacing="0.3">Veränderung</text>
<text x="410" y="68" font-size="13" fill="#ececec" text-anchor="middle" font-weight="normal" font-family='"Liberation Sans", sans-serif' letter-spacing="0.3">Veränder...</text>
<text x="501" y="68" font-size="13" fill="#ececec" text-anchor="middle" font-weight="normal" font-family='"Liberation Sans", sans-serif' letter-spacing="0.3">Bid-Volumen</text>
<text x="608" y="68" font-size="13" fill="#ececec" text-anchor="middle" font-weight="normal" font-family='"Liberation Sans", sans-serif' letter-spacing="0.3">Bid</text>
<text x="704" y="68" font-size="13" fill="#ececec" text-anchor="middle" font-weight="normal" font-family='"Liberation Sans", sans-serif' letter-spacing="0.3">Ask</text>
<text x="802" y="68" font-size="13" fill="#ececec" text-anchor="middle" font-weight="normal" font-family='"Liberation Sans", sans-serif' letter-spacing="0.3">Ask-Volumen</text>
<text x="906" y="68" font-size="13" fill="#ececec" text-anchor="middle" font-weight="normal" font-family='"Liberation Sans", sans-serif' letter-spacing="0.3">letztes gehan...</text>
<text x="985" y="68" font-size="13" fill="#ececec" text-anchor="middle" font-weight="normal" font-family='"Liberation Sans", sans-serif' letter-spacing="0.3">Volumen</text>
<text x="1074" y="68" font-size="13" fill="#ececec" text-anchor="middle" font-weight="normal" font-family='"Liberation Sans", sans-serif' letter-spacing="0.3">Position</text>
<text x="8" y="85" font-size="13" fill="#111" text-anchor="start" font-weight="normal" font-family='"Liberation Sans", sans-serif' >ATU</text>
<text x="37" y="85" font-size="10.5" fill="#888" text-anchor="start" font-weight="normal" font-family='"Liberation Sans", sans-serif' >ASX</text>
<text x="260" y="85" font-size="13" fill="#d0d0d0" text-anchor="end" font-weight="normal" font-family='"Liberation Sans", sans-serif' letter-spacing="0.4">0.780</text>
<text x="371" y="85" font-size="13" fill="#a8d8b0" text-anchor="end" font-weight="normal" font-family='"Liberation Sans", sans-serif' letter-spacing="0.4">+0.030</text>
<text x="445" y="85" font-size="13" fill="#a8d8b0" text-anchor="end" font-weight="normal" font-family='"Liberation Sans", sans-serif' letter-spacing="0.4">4.00%</text>
<text x="551" y="85" font-size="13" fill="#d0d0d0" text-anchor="end" font-weight="normal" font-family='"Liberation Sans", sans-serif' letter-spacing="0.4">2,544</text>
<text x="657" y="85" font-size="13" fill="#d0d0d0" text-anchor="end" font-weight="normal" font-family='"Liberation Sans", sans-serif' letter-spacing="0.4">0.785</text>
<text x="729" y="85" font-size="13" fill="#d0d0d0" text-anchor="end" font-weight="normal" font-family='"Liberation Sans", sans-serif' letter-spacing="0.4">0.790</text>
<text x="852" y="85" font-size="13" fill="#d0d0d0" text-anchor="end" font-weight="normal" font-family='"Liberation Sans", sans-serif' letter-spacing="0.4">9,500</text>
<text x="953" y="85" font-size="13" fill="#d0d0d0" text-anchor="end" font-weight="normal" font-family='"Liberation Sans", sans-serif' letter-spacing="0.4">500</text>
<text x="1010" y="85" font-size="13" fill="#d0d0d0" text-anchor="end" font-weight="normal" font-family='"Liberation Sans", sans-serif' letter-spacing="0.4">547K</text>
<text x="1132" y="85" font-size="13" fill="#f0f0c0" text-anchor="end" font-weight="normal" font-family='"Liberation Sans", sans-serif' letter-spacing="0.4">70,000</text>
<path d="M213.5 77 L216.5 80 L213.5 83 L210.5 80 Z" fill="#bbb"/>
<path d="M609.8 77 L612.8 80 L609.8 83 L606.8 80 Z" fill="#bbb"/>
<path d="M736.7 77 L739.7 80 L736.7 83 L733.7 80 Z" fill="#bbb"/>
<path d="M5.5 22.5 L11 28 M11 22.5 L5.5 28" stroke="#8a3a30" stroke-width="1.6"/>
<rect x="16" y="22" width="12" height="12" fill="#3cc0f0"/><rect x="16" y="22" width="12" height="5" fill="#6ad4f8"/>
<path d="M19 25 L25 25 M22 25 L22 31.5" stroke="#1a3a50" stroke-width="1.6"/>
<path d="M37.5 24 V35 M41 21 V31 M45 22 V33 M48.5 25 V34" stroke-width="1.5" fill="none" stroke="#3050e0"/>
<path d="M41 21 V31 M45 22 V33" stroke="#20c030" stroke-width="1.6"/>
<path d="M37.5 25 V35 M48.5 25 V34" stroke="#3050f0" stroke-width="1.6"/>
<path d="M56 28 L68 20" stroke="#3a90d0" stroke-width="1"/>
<path d="M63.5 25 L63.5 33 L65.5 31.5 L67 35 L68 34.5 L66.8 31 L69 31 Z" fill="#d8d8e0"/>
<line x1="86" y1="30" x2="91" y2="34" stroke="#f0a030" stroke-width="2.2" stroke-linecap="round"/>
<circle cx="83" cy="26" r="4.5" fill="#7090a8" stroke="#c0ccd8" stroke-width="1.2"/>
<path d="M80.5 26 H85.5 M83 23.5 V28.5" stroke="#20d020" stroke-width="1.6"/>
<line x1="107" y1="30" x2="112" y2="34" stroke="#f0a030" stroke-width="2.2" stroke-linecap="round"/>
<circle cx="104" cy="26" r="4.5" fill="#7090a8" stroke="#c0ccd8" stroke-width="1.2"/>
<path d="M101.5 26 H106.5" stroke="#e03020" stroke-width="1.8"/>
<rect x="120" y="27.5" width="1.2" height="1.2" fill="#c06020"/>
<rect x="126.5" y="21" width="1.2" height="1.2" fill="#c06020"/>
<rect x="122" y="27.5" width="1.2" height="1.2" fill="#c06020"/>
<rect x="126.5" y="23" width="1.2" height="1.2" fill="#c06020"/>
<rect x="124" y="27.5" width="1.2" height="1.2" fill="#c06020"/>
<rect x="126.5" y="25" width="1.2" height="1.2" fill="#c06020"/>
<rect x="126" y="27.5" width="1.2" height="1.2" fill="#c06020"/>
<rect x="126.5" y="27" width="1.2" height="1.2" fill="#c06020"/>
<rect x="128" y="27.5" width="1.2" height="1.2" fill="#c06020"/>
<rect x="126.5" y="29" width="1.2" height="1.2" fill="#c06020"/>
<rect x="130" y="27.5" width="1.2" height="1.2" fill="#c06020"/>
<rect x="126.5" y="31" width="1.2" height="1.2" fill="#c06020"/>
<rect x="132" y="27.5" width="1.2" height="1.2" fill="#c06020"/>
<rect x="126.5" y="33" width="1.2" height="1.2" fill="#c06020"/>
<rect x="134" y="27.5" width="1.2" height="1.2" fill="#c06020"/>
<rect x="126.5" y="35" width="1.2" height="1.2" fill="#c06020"/>
<rect x="146" y="20" width="4" height="15" fill="#1880d0"/>
<path d="M145 25 L142 28 L145 31 Z M151 25 L154.5 28 L151 31 Z" fill="#50e050"/>
<rect x="168" y="20" width="2" height="15" fill="#1880d0"/>
<path d="M163 25 L166.5 28 L163 31 Z M175 25 L171.5 28 L175 31 Z" fill="#50e050"/>
<line x1="185.5" y1="23.5" x2="194.5" y2="32.5" stroke="#a4b0c8" stroke-width="2.2"/>
<circle cx="185.5" cy="23.5" r="2.6" fill="#a4b0c8"/><circle cx="194.5" cy="32.5" r="2.6" fill="#a4b0c8"/>
<path d="M182.5 23 L185 24 L184 21 Z M197.5 33 L195 32 L196 35 Z" fill="#000"/>
<path d="M206 25 L216 25 L211 33 Z" fill="#fff"/>
<rect x="7" y="4" width="11" height="10" fill="#d8dce8"/>
<path d="M7.5 12 L10 9 L12 10 L14 7 L17.5 5" stroke="#2a9a2a" stroke-width="1" fill="none"/>
<path d="M7.5 13.5 L9 11 L11 12 L13 9.5 L15 10 L17.5 8" stroke="#2050c8" stroke-width="1" fill="none" stroke-dasharray="1 1"/>
<rect x="1040" y="5" width="5" height="5" fill="#909090"/><rect x="1045" y="3" width="5" height="5" fill="#b0b0b0"/><rect x="1042" y="9" width="6" height="5" fill="#a0a0a0"/><rect x="1047" y="8" width="4" height="6" fill="#808080"/>
<path d="M1056 10 H1063" stroke="#909090" stroke-width="1.2"/><rect x="1063" y="6" width="2" height="8" fill="#a0a0a0"/><rect x="1065" y="8" width="5" height="4" fill="#a0a0a0"/><rect x="1070" y="6" width="2" height="8" fill="#a0a0a0"/>
<path d="M1078 9 L1083 9 L1080.5 12 Z" fill="#909090"/>
<rect x="1093" y="10" width="12" height="3" fill="#d0d0d0"/>
<rect x="1109" y="5" width="9" height="9" fill="#8e8e8e"/><rect x="1109" y="5" width="9" height="1" fill="#b8b8b8"/>
<path d="M1123 5 L1131 13 M1131 5 L1123 13" stroke="#d8d8d8" stroke-width="1.1"/>
<path d="M1115 48 L1119.5 52.5 L1116 52.5 L1113 49 Z" fill="#d0dae0"/>
<circle cx="1113.5" cy="46.5" r="4.2" fill="#c4ccd4" stroke="#1a1a1a" stroke-width="1"/>
<circle cx="1112.8" cy="43.2" r="2" fill="#7c7d82" stroke="#1a1a1a" stroke-width="0.8"/>
<path d="M1126.5 43.5 L1134.5 51.5 M1134.5 43.5 L1126.5 51.5" stroke="#8a2c2c" stroke-width="2.6"/>
<rect x="5" y="91" width="9" height="291" fill="#222222" />
<defs><linearGradient id="btn" x1="0" y1="0" x2="0" y2="1"><stop offset="0" stop-color="#e0e0e0"/><stop offset="1" stop-color="#a8a8a8"/></linearGradient></defs>
<rect x="5" y="91" width="9" height="9" fill="url(#btn)" />
<path d="M7 98 L9.5 93.5 L12 98 Z" fill="#0a1a30"/>
<rect x="5" y="372" width="9" height="9" fill="url(#btn)" />
<path d="M7 375 L12 375 L9.5 379 Z" fill="#0a1a30"/>
<rect x="5" y="189" width="9" height="94" fill="#434343" />
<rect x="5" y="270" width="9" height="8" fill="#444" />
<rect x="5" y="189" width="9" height="2" fill="#f4f4f4" />
<rect x="5" y="191" width="9" height="1" fill="#000" />
<rect x="5" y="192" width="9" height="2" fill="#b0b0b0" />
<rect x="5" y="189" width="1" height="5" fill="#f4f4f4" />
<rect x="5" y="278" width="9" height="2" fill="#f4f4f4" />
<rect x="5" y="280" width="9" height="1" fill="#000" />
<rect x="5" y="281" width="9" height="2" fill="#b0b0b0" />
<rect x="5" y="278" width="1" height="5" fill="#f4f4f4" />
<path d="M6.5 388.5 V386.5 A3 3 0 0 1 12.5 386.5 V390" fill="none" stroke="#d8d8d8" stroke-width="1.4"/>
<rect x="5" y="390" width="9" height="8" fill="#d0d0d0" />
<rect x="9" y="392" width="1" height="5" fill="#333" />
<path d="M6 406 L13 413 M13 406 L6 413" stroke="#c8c8c8" stroke-width="2.6"/>
<path d="M6 513 L13 520 M13 513 L6 520" stroke="#c8c8c8" stroke-width="2.6"/>
<path d="M6 620 L13 627 M13 620 L6 627" stroke="#c8c8c8" stroke-width="2.6"/>
<rect x="19" y="119" width="27" height="13" fill="#ffff00" />
<text x="33" y="129.5" font-size="9" fill="#000" text-anchor="middle" font-weight="normal" font-family='"Liberation Sans", sans-serif' letter-spacing="0.9">0.780</text>
<rect x="1102" y="119" width="27" height="13" fill="#ffff00" />
<text x="1116" y="129.5" font-size="9" fill="#000" text-anchor="middle" font-weight="normal" font-family='"Liberation Sans", sans-serif' letter-spacing="0.9">0.780</text>
<path d="M1014.5 91 H1023.5 V93.5 L1019 98 L1014.5 93.5 Z" fill="#a8cff2" stroke="#1a78e8" stroke-width="1"/>
<path d="M1015.5 92 H1018 L1016 94 Z" fill="#fff"/>
<path d="M1014.5 398.5 H1023.5 V396 L1019 391.5 L1014.5 396 Z" fill="#a8cff2" stroke="#1a78e8" stroke-width="1"/>
<path d="M1015.5 397.5 H1022 M1015.5 397.5 L1018.5 393.5" stroke="#fff" stroke-width="1"/>
<rect x="917" y="311" width="166" height="72" fill="#262626" fill-opacity="0.88"/>
<text x="925" y="323" font-size="10" fill="#f0f0f0" text-anchor="start" font-weight="bold" font-family='"Liberation Sans", sans-serif' >ATU@SMART</text>
<circle cx="998.5" cy="318.5" r="2.6" fill="#5a8ad0"/><line x1="999" y1="319" x2="1003" y2="323" stroke="#a8c4e8" stroke-width="2"/>
<path d="M996.5 316.5 L998.5 318.5" stroke="#222" stroke-width="1.2"/>
<path d="M926 332.5 H932 M936 332.5 H943" stroke="#808080" stroke-width="2"/>
<text x="947" y="336.5" font-size="10" fill="#e0e0e0" text-anchor="start" font-weight="normal" font-family='"Liberation Sans", sans-serif' letter-spacing="0.55">Vor Schließung</text>
<rect x="1029" y="329" width="8" height="8" fill="#e4e4ec" />
<text x="925" y="351" font-size="10" fill="#e0e0e0" text-anchor="start" font-weight="normal" font-family='"Liberation Sans", sans-serif' letter-spacing="0.5">BOL(9, 2.0 - EMA)</text>
<circle cx="1027.5" cy="346.5" r="2.6" fill="#5a8ad0"/><line x1="1028" y1="347" x2="1032" y2="351" stroke="#a8c4e8" stroke-width="2"/>
<path d="M1025.5 344.5 L1027.5 346.5" stroke="#222" stroke-width="1.2"/>
<rect x="936" y="360" width="17" height="2" fill="#d8a8f0" />
<text x="958" y="364" font-size="10" fill="#e0e0e0" text-anchor="start" font-weight="normal" font-family='"Liberation Sans", sans-serif' letter-spacing="0.55">Obere</text>
<rect x="993" y="357" width="8" height="8" fill="#e4e4ec" />
<path d="M994.5 361 L996.5 363.5 L1000 358.5" fill="none" stroke="#1a5ad8" stroke-width="1.6"/>
<rect x="1007" y="360" width="17" height="2" fill="#20a8f0" />
<text x="1028" y="364" font-size="10" fill="#e0e0e0" text-anchor="start" font-weight="normal" font-family='"Liberation Sans", sans-serif' letter-spacing="0.55">Untere</text>
<rect x="1067" y="357" width="8" height="8" fill="#e4e4ec" />
<path d="M1068.5 361 L1070.5 363.5 L1074 358.5" fill="none" stroke="#1a5ad8" stroke-width="1.6"/>
<rect x="926" y="374" width="17" height="2" fill="#f0c860" />
<text x="947" y="379" font-size="10" fill="#e0e0e0" text-anchor="start" font-weight="normal" font-family='"Liberation Sans", sans-serif' letter-spacing="0.55">EMA(9)</text>
<rect x="991" y="372" width="8" height="8" fill="#e4e4ec" />
<path d="M992.5 376 L994.5 378.5 L998 373.5" fill="none" stroke="#1a5ad8" stroke-width="1.6"/>
<circle cx="139.5" cy="519.5" r="2.6" fill="#5a8ad0"/><line x1="140" y1="520" x2="144" y2="524" stroke="#a8c4e8" stroke-width="2"/>
<path d="M137.5 517.5 L139.5 519.5" stroke="#222" stroke-width="1.2"/>
<circle cx="234.5" cy="625.5" r="2.6" fill="#5a8ad0"/><line x1="235" y1="626" x2="239" y2="630" stroke="#a8c4e8" stroke-width="2"/>
<path d="M232.5 623.5 L234.5 625.5" stroke="#222" stroke-width="1.2"/>
<rect x="319" y="623" width="8" height="8" fill="#e4e4ec" />
<path d="M320.5 627 L322.5 629.5 L326 624.5" fill="none" stroke="#1a5ad8" stroke-width="1.6"/>
<rect x="392" y="623" width="8" height="8" fill="#e4e4ec" />
<path d="M393.5 627 L395.5 629.5 L399 624.5" fill="none" stroke="#1a5ad8" stroke-width="1.6"/>
<rect x="474" y="623" width="8" height="8" fill="#e4e4ec" />
<path d="M475.5 627 L477.5 629.5 L481 624.5" fill="none" stroke="#1a5ad8" stroke-width="1.6"/>
<rect x="2" y="745" width="9" height="9" fill="url(#btn)" />
<path d="M9 746.5 L4.5 749.5 L9 752.5 Z" fill="#0a1a30"/>
<rect x="1129" y="745" width="9" height="9" fill="url(#btn)" />
<path d="M1132 746.5 L1136.5 749.5 L1132 752.5 Z" fill="#0a1a30"/>
<rect x="1100" y="745" width="29" height="9" fill="#333" />
<rect x="1100" y="745" width="4" height="9" fill="#f0f0f0" />
<rect x="1102" y="746" width="1" height="7" fill="#111" />
<rect x="1125" y="745" width="4" height="9" fill="#f0f0f0" />
<rect x="1127" y="746" width="1" height="7" fill="#111" />
</svg></body></html>
